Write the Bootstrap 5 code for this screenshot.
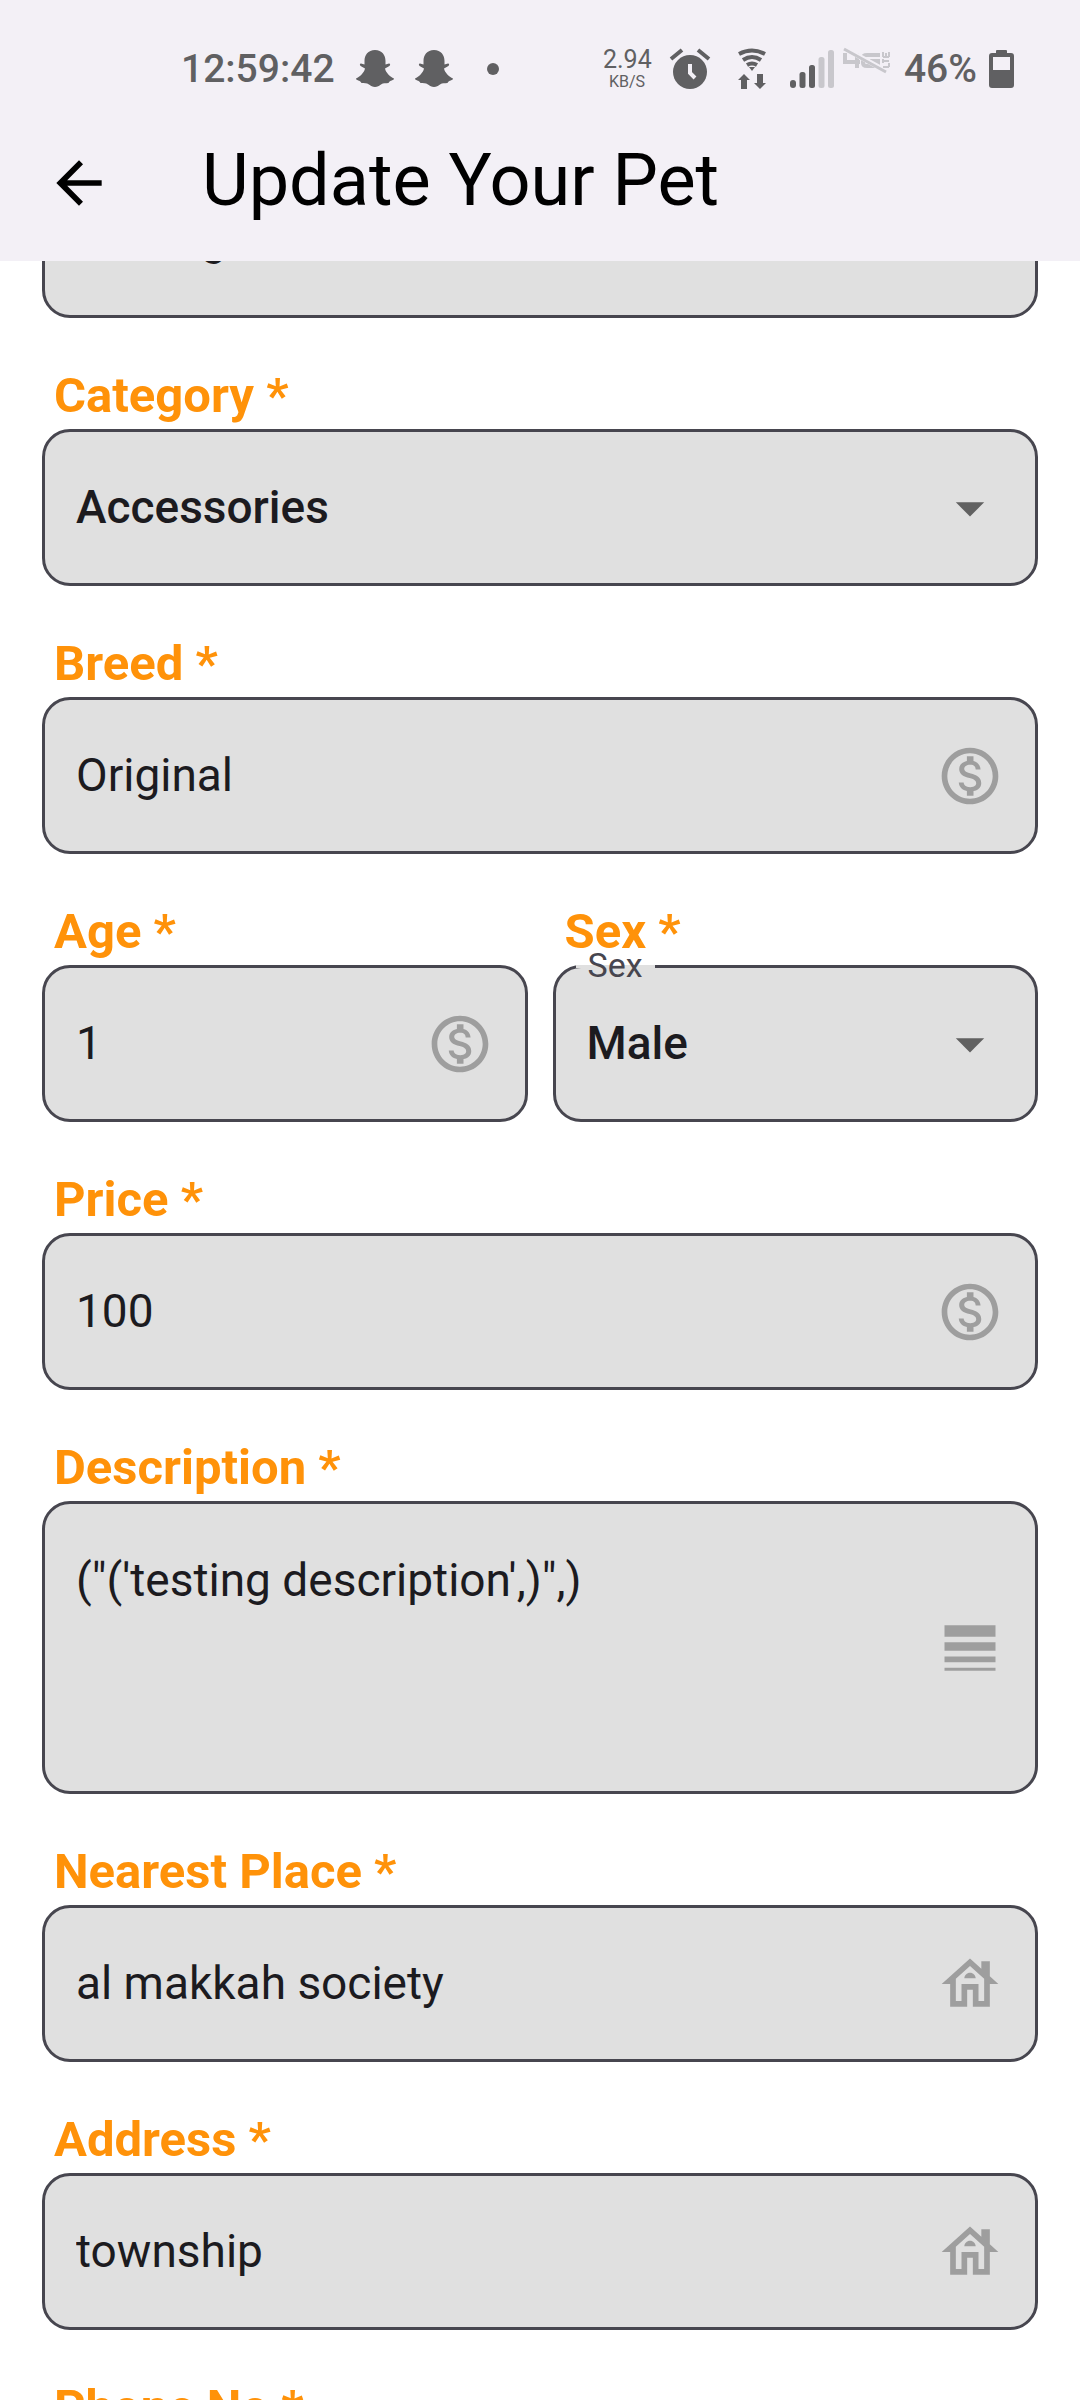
<!DOCTYPE html>
<html lang="en">
<head>
<meta charset="utf-8">
<meta name="viewport" content="width=device-width, initial-scale=1">
<title>Update Your Pet</title>
<link href="https://cdn.jsdelivr.net/npm/bootstrap@5.3.0/dist/css/bootstrap.min.css" rel="stylesheet">
<style>
  body { font-family: Roboto, "Noto Sans", sans-serif; background: #fff; color: #1c1b1f; }
  .app-header { background: #f3f0f6; z-index: 2; }
  .status-row { height: 48px; margin: 45px 66px 12px 181px; color: #606062; font-size: 39px; font-weight: 500; line-height: 48px; }
  .status-left { gap: 21px; }
  .net-speed { width: 48px; margin-right: 14px; font-weight: 400; text-align: center; }
  .speed-num { font-size: 25px; line-height: 26px; }
  .speed-unit { font-size: 16px; line-height: 18px; }
  .status-gap { margin-right: 27px; }
  .lte-icon { margin: 0 13px 16px 0; }
  .title-row { height: 156px; padding: 0 45px; gap: 89px; }
  .page-title { font-size: 72px; line-height: 84px; font-weight: 400; color: #000; }
  .glyph { width: 68px; height: 68px; fill: #9e9e9e; }
  .glyph-arrow { fill: #616161; pointer-events: none; }
  .glyph-back { fill: #000; }
  .pet-form { padding: 0 42px; margin-top: -100px; }
  .field-label { font-size: 49px; line-height: 56px; font-weight: 700; color: #ff9209; margin: 50px 12px 5px; }
  .field-box { height: 157px; border: 3px solid #47464f; border-radius: 28px; background: #e0e0e0; padding: 0 31px; }
  .field-box-tall { height: 293px; }
  .field-box .form-control, .field-box .form-select {
    border: 0; border-radius: 0; padding: 0 0 2px; background: transparent; box-shadow: none;
    color: #1c1b1f; font-size: 46px; line-height: 54px; min-width: 0;
  }
  .field-box .form-select { font-weight: 500; }
  .field-box textarea.form-control { height: 190px; resize: none; }
  .pair { gap: 25px; }
  .pair > div { flex: 1 1 0; min-width: 0; }
  .float-label { top: -23px; left: 20px; padding: 0 12px; font-size: 34px; line-height: 40px; color: #47464f;
    background: linear-gradient(#e0e0e0, #e0e0e0) 0 20px / 100% 3px no-repeat; }
</style>
</head>
<body>
<div class="d-flex flex-column vh-100 overflow-hidden">
  <header class="app-header flex-shrink-0 position-relative">
    <div class="status-row d-flex align-items-center justify-content-between">
      <div class="status-left d-flex align-items-center">
        <span>12:59:42</span>
        <svg width="38" height="38" viewBox="0 0 38 38" fill="#606062"><path id="ghost" d="M19 0C12 0 8.500 5 8.500 11v3.500L5 13.500c-1.500 0-1.500 2 0 2.700L9 18.500C8 23 4 26.500 0 28.500c0 2 4 1.500 5.500 4.500 3 .5 5-.2 7.500 1.500 2 1.400 3.500 2.500 6 2.500s4-1.100 6-2.500c2.500-1.700 4.500-1 7.500-1.500 1.500-3 5.500-2.500 5.500-4.500-4-2-8-5.500-9-10l4-2.300c1.500-.7 1.500-2.700 0-2.700l-3.500 1V11C29.500 5 26 0 19 0z"/></svg>
        <svg width="38" height="38" viewBox="0 0 38 38" fill="#606062"><use href="#ghost"/></svg>
        <svg width="50" height="38" viewBox="0 0 50 38" fill="#606062"><circle cx="19" cy="19" r="6"/></svg>
      </div>
      <div class="d-flex align-items-center">
        <div class="net-speed d-flex flex-column"><span class="speed-num">2.94</span><span class="speed-unit">KB/S</span></div>
        <svg class="status-gap" width="46" height="42" viewBox="0 0 46 42" fill="none" stroke="#606062"><circle cx="25" cy="24" r="17" fill="#606062" stroke="none"/><path d="M6 11 17 2M44 11 33 2" stroke-width="4"/><path d="M25 16v9l5 5" stroke="#f3f0f6" stroke-width="4"/></svg>
        <svg class="me-4" width="28" height="42" viewBox="0 0 28 42" fill="none" stroke="#606062" stroke-width="4"><path d="M1 6q13-7 26 0M5 12q9-6 18 0M9 17q5-3 10 0"/><path d="M11 19h6l-3 4z" stroke="none" fill="#606062"/><path d="M6 26 0 32h3v9h6v-9h3zM19 26v9h-3l6 6 6-6h-3v-9z" stroke="none" fill="#606062"/></svg>
        <svg class="me-2" width="45" height="40" viewBox="0 0 45 40" fill="#606062"><rect y="31" width="6" height="8" rx="3"/><rect x="9.500" y="23" width="6" height="16" rx="2.500"/><rect x="19" y="16" width="6" height="23" rx="2.500"/><g fill="#c8c7cc"><rect x="28.500" y="8" width="6" height="31" rx="2.500"/><rect x="38" y="1" width="6" height="38" rx="2.500"/></g></svg>
        <svg class="lte-icon" width="48" height="28" viewBox="0 0 48 28" fill="none" stroke="#c8c7cc"><path d="M2 6v9h15M14 6v15M37 8H24q-4 0-4 3v5q0 3 4 3h11v-5h-8" stroke-width="4"/><path d="M1 1l42 23" stroke="#f3f0f6" stroke-width="5"/><path d="M1 2l42 23" stroke-width="3"/><path d="M46 20h-6M46 20v-4M40 14h6M40 16v-4M40 10h6M40 10V5M43 10V6M46 10V5" stroke-width="2"/></svg>
        <span class="me-2">46%</span>
        <svg class="ms-1" width="25" height="38" viewBox="0 0 25 38"><path fill="#606062" fill-rule="evenodd" d="M7 1q0-1 1-1h9q1 0 1 1v2h4q3 0 3 3v29q0 3-3 3H3q-3 0-3-3V6q0-3 3-3h4zM4 7v13h17V7z"/></svg>
      </div>
    </div>
    <div class="title-row d-flex align-items-center">
      <button type="button" class="btn border-0 p-0 d-flex" aria-label="Back"><svg class="glyph glyph-back" viewBox="0 0 24 24"><path d="M20 11H7.830l5.590-5.590L12 4l-8 8 8 8 1.410-1.410L7.830 13H20v-2z"/></svg></button>
      <h1 class="page-title m-0 pb-1">Update Your Pet</h1>
    </div>
  </header>

  <svg class="d-none">
    <symbol id="coin" viewBox="0 0 24 24"><path d="M12 2C6.480 2 2 6.480 2 12s4.480 10 10 10 10-4.480 10-10S17.520 2 12 2zm0 18c-4.410 0-8-3.590-8-8s3.590-8 8-8 8 3.590 8 8-3.590 8-8 8zm.310-8.860c-1.770-.450-2.340-.940-2.340-1.670 0-.840.790-1.430 2.100-1.430 1.380 0 1.900.660 1.940 1.640h1.710c-.050-1.340-.870-2.570-2.490-2.970V5H10.900v1.690c-1.510.320-2.720 1.300-2.720 2.810 0 1.790 1.490 2.690 3.660 3.210 1.950.460 2.340 1.150 2.340 1.870 0 .530-.390 1.390-2.100 1.390-1.600 0-2.230-.720-2.320-1.640H8.040c.100 1.700 1.360 2.660 2.860 2.970V19h2.340v-1.670c1.520-.290 2.720-1.160 2.730-2.770-.010-2.200-1.900-2.960-3.660-3.420z"/></symbol>
    <symbol id="house" viewBox="0 0 24 24"><path d="M19 9.300V4h-3v2.600L12 3 2 12h3v8h6v-6h2v6h6v-8h3l-3-2.700zM17 18h-2v-6H9v6H7v-7.810l5-4.500 5 4.500V18z"/><path d="M10 10h4c0-1.100-.9-2-2-2s-2 .9-2 2z"/></symbol>
    <symbol id="lines" viewBox="0 0 24 24"><path d="M3 17h18v-2H3v2zm0 3h18v-1H3v1zm0-7h18v-3H3v3zm0-9v4h18V4H3z"/></symbol>
    <symbol id="caret" viewBox="0 0 24 24"><path d="M7 10l5 5 5-5z"/></symbol>
  </svg>

  <form class="pet-form flex-fill">
    <div class="field-box d-flex align-items-center"><input class="form-control" type="text" value="Testing" aria-label="Name"></div>

    <label class="field-label d-block" for="category">Category *</label>
    <div class="field-box d-flex align-items-center">
      <select class="form-select" id="category"><option>Accessories</option></select>
      <svg class="glyph glyph-arrow flex-shrink-0"><use href="#caret"/></svg>
    </div>

    <label class="field-label d-block" for="breed">Breed *</label>
    <div class="field-box d-flex align-items-center">
      <input class="form-control" id="breed" type="text" value="Original">
      <svg class="glyph flex-shrink-0"><use href="#coin"/></svg>
    </div>

    <div class="pair d-flex">
      <div>
        <label class="field-label d-block" for="age">Age *</label>
        <div class="field-box d-flex align-items-center">
          <input class="form-control" id="age" type="text" value="1">
          <svg class="glyph flex-shrink-0"><use href="#coin"/></svg>
        </div>
      </div>
      <div>
        <label class="field-label d-block" for="sex">Sex *</label>
        <div class="field-box d-flex align-items-center position-relative">
          <label class="float-label position-absolute" for="sex">Sex</label>
          <select class="form-select" id="sex"><option>Male</option><option>Female</option></select>
          <svg class="glyph glyph-arrow flex-shrink-0"><use href="#caret"/></svg>
        </div>
      </div>
    </div>

    <label class="field-label d-block" for="price">Price *</label>
    <div class="field-box d-flex align-items-center">
      <input class="form-control" id="price" type="text" value="100">
      <svg class="glyph flex-shrink-0"><use href="#coin"/></svg>
    </div>

    <label class="field-label d-block" for="description">Description *</label>
    <div class="field-box field-box-tall d-flex align-items-center">
      <textarea class="form-control" id="description">("('testing description',)",)</textarea>
      <svg class="glyph flex-shrink-0"><use href="#lines"/></svg>
    </div>

    <label class="field-label d-block" for="place">Nearest Place *</label>
    <div class="field-box d-flex align-items-center">
      <input class="form-control" id="place" type="text" value="al makkah society">
      <svg class="glyph flex-shrink-0"><use href="#house"/></svg>
    </div>

    <label class="field-label d-block" for="address">Address *</label>
    <div class="field-box d-flex align-items-center">
      <input class="form-control" id="address" type="text" value="township">
      <svg class="glyph flex-shrink-0"><use href="#house"/></svg>
    </div>

    <label class="field-label d-block" for="phone">Phone No *</label>
    <div class="field-box d-flex align-items-center"><input class="form-control" id="phone" type="tel"></div>
  </form>
</div>
<script src="https://cdn.jsdelivr.net/npm/bootstrap@5.3.0/dist/js/bootstrap.bundle.min.js"></script>
</body>
</html>
